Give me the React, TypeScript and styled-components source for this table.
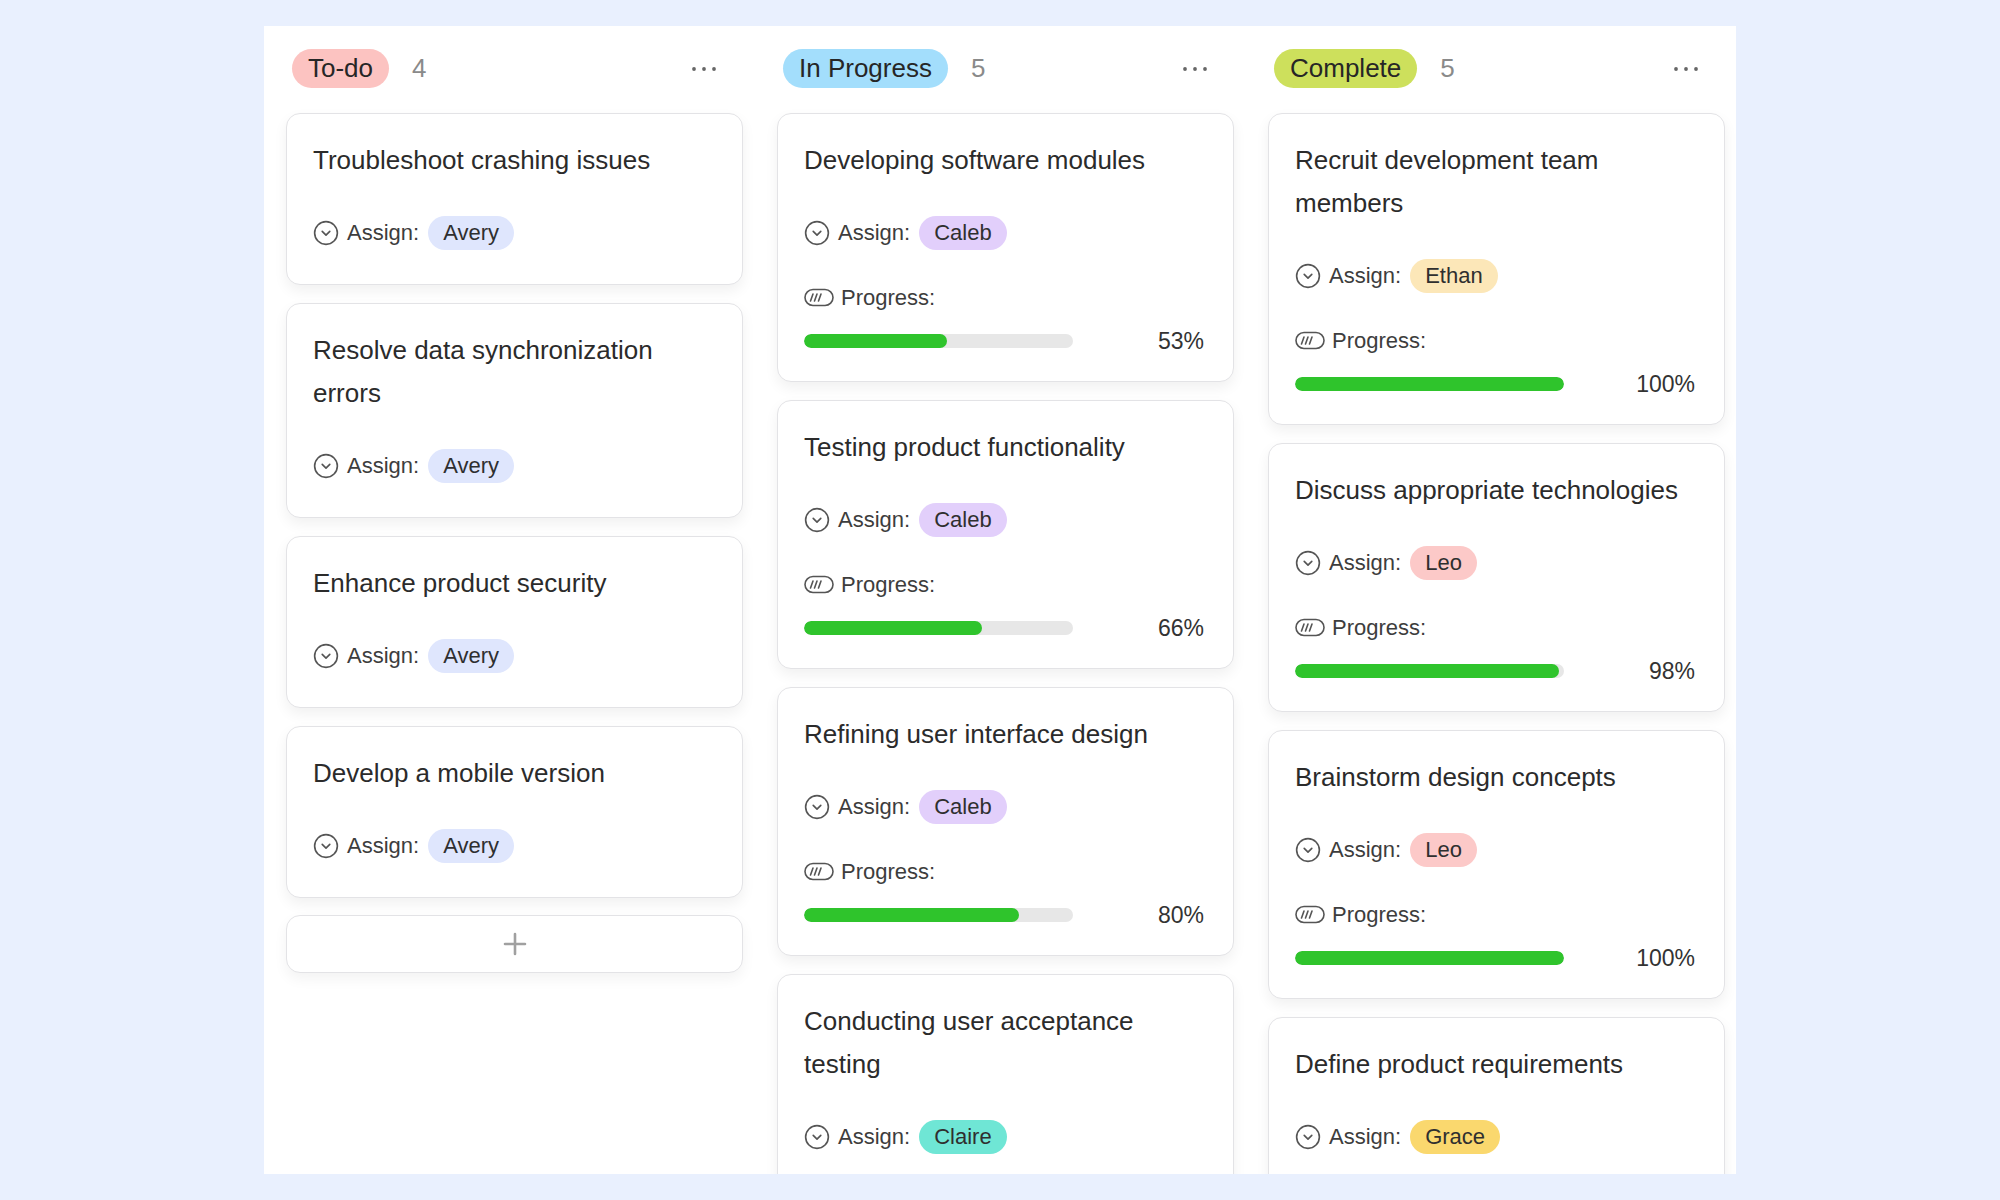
import styled, { createGlobalStyle } from "styled-components"

type Task = {
  title: string
  who: string
  progress?: number
}

type Lane = {
  name: string
  color: string
  count: number
  tasks: Task[]
  canAdd?: boolean
}

const chipColors: Record<string, string> = {
  Avery: "#dfe6fd",
  Caleb: "#e2cffb",
  Claire: "#6fe6d5",
  Ethan: "#fce7b8",
  Leo: "#fcc9c8",
  Grace: "#fad86e",
}

const lanes: Lane[] = [
  {
    name: "To-do",
    color: "#fcc3c1",
    count: 4,
    canAdd: true,
    tasks: [
      { title: "Troubleshoot crashing issues", who: "Avery" },
      { title: "Resolve data synchronization errors", who: "Avery" },
      { title: "Enhance product security", who: "Avery" },
      { title: "Develop a mobile version", who: "Avery" },
    ],
  },
  {
    name: "In Progress",
    color: "#a3defc",
    count: 5,
    tasks: [
      { title: "Developing software modules", who: "Caleb", progress: 53 },
      { title: "Testing product functionality", who: "Caleb", progress: 66 },
      { title: "Refining user interface design", who: "Caleb", progress: 80 },
      { title: "Conducting user acceptance testing", who: "Claire" },
    ],
  },
  {
    name: "Complete",
    color: "#cde05c",
    count: 5,
    tasks: [
      { title: "Recruit development team members", who: "Ethan", progress: 100 },
      { title: "Discuss appropriate technologies", who: "Leo", progress: 98 },
      { title: "Brainstorm design concepts", who: "Leo", progress: 100 },
      { title: "Define product requirements", who: "Grace" },
    ],
  },
]

const GlobalStyle = createGlobalStyle`
  body {
    margin: 0;
    background: #e9f0fe;
    font-family: "Liberation Sans", Arial, sans-serif;
    color: #2b2b2b;
  }
`

const Page = styled.div`
  min-height: 1200px;
  padding-top: 26px;
  box-sizing: border-box;
  display: flex;
  justify-content: center;
`

const Board = styled.div`
  width: 1472px;
  height: 1148px;
  background: #ffffff;
  display: grid;
  grid-template-columns: repeat(3, 491px);
  overflow: hidden;
`

const Column = styled.div`
  padding: 22px 12px 0 22px;
  display: flex;
  flex-direction: column;
`

const Header = styled.div`
  height: 39px;
  padding: 1px 26px 0 6px;
  margin-bottom: 25px;
  display: flex;
  align-items: center;
`

const StatusPill = styled.span<{ $bg: string }>`
  height: 39px;
  padding: 0 16px;
  border-radius: 20px;
  background: ${(p) => p.$bg};
  display: inline-flex;
  align-items: center;
  font-size: 26px;
  color: #262626;
`

const Count = styled.span`
  margin-left: 23px;
  font-size: 26px;
  color: #8a8a8a;
`

const More = styled.span`
  margin-left: auto;
  display: flex;
  color: #666;
`

const CardList = styled.div`
  display: flex;
  flex-direction: column;
  gap: 18px;
`

const Card = styled.div`
  background: #fff;
  border: 1px solid #e3e3e6;
  border-radius: 14px;
  padding: 25px 29px 30px 26px;
  box-shadow: 0 6px 14px rgba(0, 0, 0, 0.06);
`

const Title = styled.div`
  font-size: 26px;
  line-height: 43px;
  color: #2b2b2b;
`

const Row = styled.div<{ $top: number }>`
  margin-top: ${(p) => p.$top}px;
  height: 43px;
  display: flex;
  align-items: center;
  font-size: 22px;
  color: #3d3d3d;
`

const Label = styled.span`
  margin-left: 8px;
`

const Chip = styled.span<{ $bg: string }>`
  margin-left: 9px;
  height: 34px;
  padding: 0 15px;
  border-radius: 17px;
  background: ${(p) => p.$bg};
  display: inline-flex;
  align-items: center;
  color: #2f2f2f;
`

const BarRow = styled.div`
  margin-top: 12px;
  height: 20px;
  display: flex;
  align-items: center;
  justify-content: space-between;
`

const Track = styled.div`
  width: 269px;
  height: 14px;
  border-radius: 7px;
  background: #e7e7e7;
  overflow: hidden;
`

const Fill = styled.div`
  height: 100%;
  border-radius: 7px;
  background: #2fc42c;
`

const Percent = styled.span`
  font-size: 23px;
  color: #333;
`

const AddCard = styled.div`
  margin-top: 17px;
  height: 56px;
  border: 1px solid #e3e3e6;
  border-radius: 14px;
  background: #fff;
  box-shadow: 0 6px 14px rgba(0, 0, 0, 0.05);
  display: flex;
  align-items: center;
  justify-content: center;
`

const DotsIcon = () => (
  <svg width="26" height="6" viewBox="0 0 26 6">
    <circle cx="3" cy="3" r="1.9" fill="currentColor" />
    <circle cx="13" cy="3" r="1.9" fill="currentColor" />
    <circle cx="23" cy="3" r="1.9" fill="currentColor" />
  </svg>
)

const AssignIcon = () => (
  <svg width="26" height="26" viewBox="0 0 24 24" fill="none" stroke="#555" strokeWidth="1.5" strokeLinecap="round" strokeLinejoin="round">
    <circle cx="12" cy="12" r="10.5" />
    <path d="m15.5 10.5-3.5 3.5-3.5-3.5" />
  </svg>
)

const ProgressIcon = () => (
  <svg width="30" height="19" viewBox="0 0 30 19" fill="none" stroke="#555" strokeWidth="1.6" strokeLinecap="round">
    <rect x="1" y="1.5" width="28" height="16" rx="8" />
    <path d="M6.5 13 9 6M10.5 13 13 6M14.5 13 17 6" />
  </svg>
)

const PlusIcon = () => (
  <svg width="26" height="26" viewBox="0 0 26 26" stroke="#a0a0a0" strokeWidth="2.6" strokeLinecap="round">
    <path d="M13 3v20M3 13h20" />
  </svg>
)

const TaskCard = ({ task }: { task: Task }) => (
  <Card>
    <Title>{task.title}</Title>
    <Row $top={29}>
      <AssignIcon />
      <Label>Assign:</Label>
      <Chip $bg={chipColors[task.who]}>{task.who}</Chip>
    </Row>
    {task.progress !== undefined && (
      <>
        <Row $top={22}>
          <ProgressIcon />
          <Label style={{ marginLeft: 7 }}>Progress:</Label>
        </Row>
        <BarRow>
          <Track>
            <Fill style={{ width: `${task.progress}%` }} />
          </Track>
          <Percent>{task.progress}%</Percent>
        </BarRow>
      </>
    )}
  </Card>
)

const App = () => {
  return (
    <>
      <GlobalStyle />
      <Page>
        <Board>
          {lanes.map((lane) => (
            <Column key={lane.name}>
              <Header>
                <StatusPill $bg={lane.color}>{lane.name}</StatusPill>
                <Count>{lane.count}</Count>
                <More>
                  <DotsIcon />
                </More>
              </Header>
              <CardList>
                {lane.tasks.map((t) => (
                  <TaskCard key={t.title} task={t} />
                ))}
              </CardList>
              {lane.canAdd && (
                <AddCard>
                  <PlusIcon />
                </AddCard>
              )}
            </Column>
          ))}
        </Board>
      </Page>
    </>
  )
}

export default App
